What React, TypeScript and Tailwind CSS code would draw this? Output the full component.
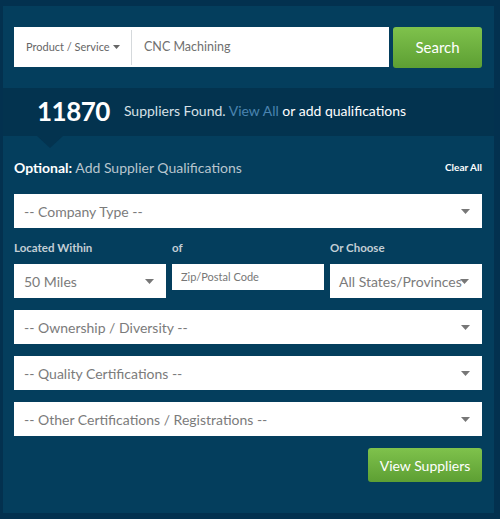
import React from 'react';

const Caret = ({ className = '' }: { className?: string }) => (
  <svg width="9" height="5" viewBox="0 0 9 5" className={className}>
    <path d="M0 0h9L4.5 5z" fill="currentColor" />
  </svg>
);

const SelectBox = ({ label, className = '' }: { label: string; className?: string }) => (
  <div className={`flex h-[34px] items-center justify-between bg-white pl-[10px] pr-[12px] text-[14px] text-[#7b7b7b] ${className}`}>
    <span className="whitespace-nowrap">{label}</span>
    <Caret className="text-[#777]" />
  </div>
);

const App = () => {
  return (
    <div className="h-[519px] w-[500px] bg-[#03314f] pb-[6px] pl-[3px] pr-[6px] pt-[6px]" style={{ fontFamily: 'Lato, "Open Sans", sans-serif' }}>
      <div className="flex h-full flex-col bg-[#043e5d]">
        {/* search */}
        <div className="flex h-[82px] gap-[4px] pl-[11px] pr-[12px] pt-[21px]">
          <div className="flex h-[40px] flex-1 items-center bg-white">
            <div className="flex h-[35px] w-[118px] items-center gap-[3px] border-r border-[#d5d9dc] pl-[12px] text-[11px] text-[#666]">
              Product / Service
              <svg width="7" height="4" viewBox="0 0 7 4" className="text-[#666]">
                <path d="M0 0h7L3.5 4z" fill="currentColor" />
              </svg>
            </div>
            <span className="pl-[12px] text-[12.5px] text-[#707070]">CNC Machining</span>
          </div>
          <button className="h-[41px] w-[89px] rounded-[3px] bg-gradient-to-b from-[#7fc24c] to-[#5d9f33] text-[15px] text-white">
            Search
          </button>
        </div>

        {/* results band */}
        <div className="flex h-[48px] items-center bg-[#03334f] pb-[3px] pl-[34px]">
          <span className="text-[26px] font-bold leading-none tracking-[-0.5px] text-white">11870</span>
          <span className="ml-[14px] text-[14px] text-[#d6e0e6]">
            Suppliers Found. <span className="text-[#4a84b0]">View All</span> <span className="text-white">or add qualifications</span>
          </span>
        </div>

        {/* qualifications */}
        <div className="relative flex flex-1 flex-col px-[11px] pr-[12px] pt-[21px]">
          <div className="absolute left-[34px] top-0 h-0 w-0 border-l-[13px] border-r-[13px] border-t-[12px] border-l-transparent border-r-transparent border-t-[#03334f]" />
          <div className="flex h-[20px] items-center justify-between">
            <span className="text-[14px] text-[#b8c5ce]">
              <span className="font-bold text-white">Optional:</span> Add Supplier Qualifications
            </span>
            <span className="text-[10px] font-bold text-white">Clear All</span>
          </div>

          <SelectBox label="-- Company Type --" className="mt-[17px]" />

          <div className="mt-[12px] grid grid-cols-3 gap-x-[6px]">
            <span className="flex h-[16px] items-center text-[11.5px] font-bold text-[#c3ced5]">Located Within</span>
            <span className="flex h-[16px] items-center text-[11.5px] font-bold text-[#c3ced5]">of</span>
            <span className="flex h-[16px] items-center text-[11.5px] font-bold text-[#c3ced5]">Or Choose</span>
            <SelectBox label="50 Miles" className="mt-[8px]" />
            <div className="mt-[8px] flex h-[26px] items-center bg-white pl-[9px] text-[11px] text-[#777]">Zip/Postal Code</div>
            <div className="mt-[8px] flex h-[34px] items-center overflow-hidden bg-white pl-[9px] pr-[10px] text-[14px] text-[#7b7b7b]">
              <span className="whitespace-nowrap">All States/Provinces</span>
              <Caret className="-ml-[2px] shrink-0 text-[#777]" />
            </div>
          </div>

          <SelectBox label="-- Ownership / Diversity --" className="mt-[12px]" />
          <SelectBox label="-- Quality Certifications --" className="mt-[12px]" />
          <SelectBox label="-- Other Certifications / Registrations --" className="mt-[12px]" />

          <div className="mt-[12px] flex justify-end">
            <button className="h-[34px] w-[114px] rounded-[3px] bg-gradient-to-b from-[#7fc24c] to-[#5d9f33] text-[14px] text-white">
              View Suppliers
            </button>
          </div>
        </div>
      </div>
    </div>
  );
};

export default App;
